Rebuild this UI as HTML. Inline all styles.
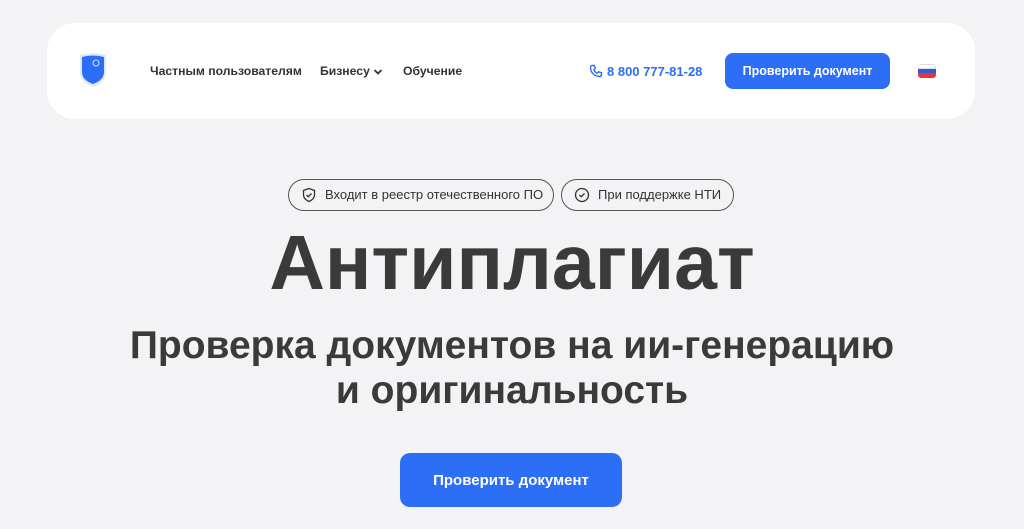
<!DOCTYPE html>
<html><head><meta charset="utf-8"><style>
*{margin:0;padding:0;box-sizing:border-box}
body{width:1024px;height:529px;background:#f3f3f5;font-family:"Liberation Sans",sans-serif;color:#333;position:relative;overflow:hidden}
.hdr{position:absolute;left:47px;top:23px;width:928px;height:96px;background:#fff;border-radius:28px}
.nav{position:absolute;top:64px;font-size:12.2px;font-weight:bold;color:#333;line-height:15px}
.btn{position:absolute;background:#2d6ef7;color:#fff;font-weight:bold;text-align:center;border-radius:8px}
.badge{position:absolute;top:179px;height:32px;border:1px solid #555;border-radius:16px;font-size:13px;color:#333;line-height:30px;padding-left:36px}
.badge svg{position:absolute;left:12px;top:7px}
h1{position:absolute;top:219px;width:100%;text-align:center;font-size:77px;font-weight:bold;color:#3a3a3a}
h2{position:absolute;top:323px;width:100%;text-align:center;font-size:39px;font-weight:bold;color:#3a3a3a;line-height:45px}
</style></head><body>
<div class="hdr"></div>
<svg style="position:absolute;left:78px;top:52px" width="30" height="36" viewBox="0 0 30 36"><path d="M2 3 Q15 -1 28 3 L28 20 Q28 30 15 35 Q2 30 2 20Z" fill="#dfe9f7"/><path d="M4 5 Q15 2 26 5 L26 20 Q26 28 15 32 Q4 28 4 20Z" fill="#2d6ef7"/><circle cx="18" cy="11" r="3" fill="none" stroke="#cfe0ff" stroke-width="1"/></svg>
<div class="nav" style="left:150px">Частным пользователям</div>
<div class="nav" style="left:320px">Бизнесу <svg width="10" height="8" viewBox="0 0 10 8" style="vertical-align:middle"><path d="M1.5 2 L5 5.5 L8.5 2" fill="none" stroke="#333" stroke-width="1.8"/></svg></div>
<div class="nav" style="left:403px">Обучение</div>
<svg style="position:absolute;left:589px;top:64px" width="14" height="14" viewBox="0 0 14 14"><path d="M3 1.5 L5.3 1.5 L6.3 4.5 L4.8 5.8 Q6 8.5 8.3 9.3 L9.6 7.8 L12.5 8.8 L12.5 11 Q12 12.5 10.5 12.5 Q2 11.5 1.5 3.5 Q1.5 1.8 3 1.5Z" fill="none" stroke="#2d6ef7" stroke-width="1.4"/></svg>
<div class="nav" style="left:607px;color:#2d6ef7;font-size:13px">8 800 777-81-28</div>
<div class="btn" style="left:725px;top:53px;width:165px;height:36px;line-height:37px;font-size:12.5px">Проверить документ</div>
<div style="position:absolute;left:918px;top:64px;width:18px;height:14px;border-radius:3px;overflow:hidden"><div style="height:5px;background:#fff;border:1px solid #ddd"></div><div style="height:4px;background:#2d5ad8"></div><div style="height:5px;background:#e33"></div></div>
<div class="badge" style="left:288px;width:266px"><svg width="16" height="16" viewBox="0 0 16 16" fill="none" stroke="#333" stroke-width="1.3"><path d="M8 1.5 L13.5 3.5 V8 Q13.5 12 8 14.5 Q2.5 12 2.5 8 V3.5Z"/><path d="M5.5 8 L7.3 9.7 L10.5 6.5"/></svg>Входит в реестр отечественного ПО</div>
<div class="badge" style="left:561px;width:173px"><svg width="16" height="16" viewBox="0 0 16 16" fill="none" stroke="#333" stroke-width="1.3"><circle cx="8" cy="8" r="6.5"/><path d="M5.5 8 L7.3 9.7 L10.5 6.5"/></svg>При поддержке НТИ</div>
<h1>Антиплагиат</h1>
<h2>Проверка документов на ии-генерацию<br>и оригинальность</h2>
<div class="btn" style="left:400px;top:453px;width:222px;height:54px;line-height:56px;font-size:15px;border-radius:10px">Проверить документ</div>
</body></html>
